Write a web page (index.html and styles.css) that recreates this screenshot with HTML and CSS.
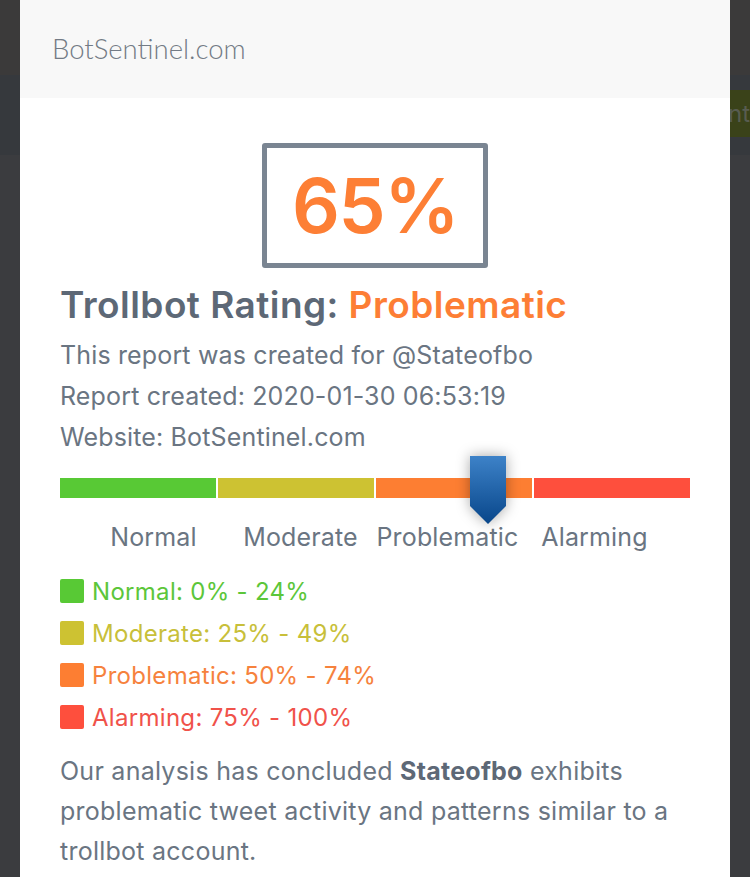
FILE: index.html
```html
<!DOCTYPE html>
<html>
<head>
<meta charset="utf-8">
<link rel="stylesheet" href="styles.css">
</head>
<body>
<div class="page">
  <div class="topbar"></div>
  <div class="navband"><span class="navbtn">nt</span></div>
</div>
<div class="modal">
  <div class="modal-header">BotSentinel.com</div>
  <div class="modal-body">
    <div class="score-wrap"><div class="score">65%</div></div>
    <h2 class="rating">Trollbot Rating: <span class="problematic">Problematic</span></h2>
    <p class="info">This report was created for @Stateofbo</p>
    <p class="info">Report created: 2020-01-30 06:53:19</p>
    <p class="info">Website: BotSentinel.com</p>
    <div class="meter">
      <div class="bar">
        <div class="seg seg-normal"></div>
        <div class="seg seg-moderate"></div>
        <div class="seg seg-problematic"></div>
        <div class="seg seg-alarming"></div>
      </div>
      <div class="marker" style="left: 65%;">
        <svg width="36" height="68" viewBox="0 0 36 68">
          <defs>
            <linearGradient id="mg" x1="0" y1="0" x2="0" y2="1">
              <stop offset="0" stop-color="#3d82c8"/>
              <stop offset="1" stop-color="#08468a"/>
            </linearGradient>
          </defs>
          <path d="M0 0 H36 V50 L18 68 L0 50 Z" fill="url(#mg)"/>
        </svg>
      </div>
    </div>
    <div class="labels">
      <span>Normal</span><span>Moderate</span><span>Problematic</span><span>Alarming</span>
    </div>
    <ul class="legend">
      <li class="l-normal"><i></i>Normal: 0% - 24%</li>
      <li class="l-moderate"><i></i>Moderate: 25% - 49%</li>
      <li class="l-problematic"><i></i>Problematic: 50% - 74%</li>
      <li class="l-alarming"><i></i>Alarming: 75% - 100%</li>
    </ul>
    <p class="summary">Our analysis has concluded <b>Stateofbo</b> exhibits problematic tweet activity and patterns similar to a trollbot account.</p>
  </div>
</div>
</body>
</html>
```
FILE: styles.css
```css
html, body {
  margin: 0;
  padding: 0;
}
body {
  background: #3b3c3f;
  width: 750px;
  height: 877px;
  overflow: hidden;
  position: relative;
  font-family: Inter, "Liberation Sans", sans-serif;
}
.topbar {
  height: 75px;
  background: #3b3a3a;
}
.navband {
  height: 80px;
  background: #36393d;
  display: flex;
  justify-content: flex-end;
  align-items: flex-start;
}
.navbtn {
  margin-top: 15px;
  height: 47px;
  width: 40px;
  background: #3a4219;
  color: #585c50;
  font-size: 24px;
  line-height: 47px;
  text-align: right;
  overflow: hidden;
}
.modal {
  position: absolute;
  left: 20px;
  top: 0;
  width: 710px;
  height: 877px;
  background: #fff;
  overflow: hidden;
}
.modal-header {
  height: 98px;
  background: #f8f8f8;
  padding-left: 32px;
  box-sizing: border-box;
  font-family: Lato, sans-serif;
  font-weight: 300;
  font-size: 27.5px;
  line-height: 98px;
  color: #737b85;
}
.modal-body {
  padding: 0 40px;
}
.score-wrap {
  display: flex;
  justify-content: center;
  padding-top: 45px;
}
.score {
  width: 226px;
  height: 125px;
  box-sizing: border-box;
  border: 5px solid #7a8592;
  border-radius: 3px;
  display: flex;
  align-items: center;
  justify-content: center;
  font-weight: 600;
  font-size: 75px;
  color: #fd7f35;
  letter-spacing: -1.5px;
}
.rating {
  margin: 14px 0 0;
  font-size: 37px;
  font-weight: 600;
  letter-spacing: 0.45px;
  line-height: 46px;
  color: #5d6876;
}
.problematic {
  color: #fd7e35;
}
.info {
  margin: 0;
  font-size: 25px;
  letter-spacing: 0.15px;
  line-height: 41px;
  color: #6a7582;
}
.rating + .info {
  margin-top: 7px;
}
.meter {
  position: relative;
  margin-top: 20px;
  height: 20px;
}
.bar {
  display: grid;
  grid-template-columns: repeat(4, 1fr);
  gap: 2px;
  height: 20px;
}
.seg-normal { background: #58c935; }
.seg-moderate { background: #cdc232; }
.seg-problematic { background: #fd7e32; }
.seg-alarming { background: #fe4f3d; }
.marker {
  position: absolute;
  top: -22px;
  width: 36px;
  height: 68px;
  filter: drop-shadow(0 0 7px rgba(0, 0, 0, 0.35));
}
.marker svg {
  display: block;
}
.labels {
  display: grid;
  grid-template-columns: repeat(4, 147px);
  padding-left: 20px;
  margin-top: 20px;
  font-size: 25px;
  letter-spacing: 0.15px;
  line-height: 38px;
  color: #6a7582;
  text-align: center;
  white-space: nowrap;
}
.legend {
  list-style: none;
  margin: 14px 0 0;
  padding: 0;
}
.legend li {
  display: flex;
  align-items: center;
  height: 42px;
  font-size: 24px;
  letter-spacing: 0.3px;
}
.legend i {
  width: 24px;
  height: 24px;
  border-radius: 2px;
  margin-right: 8px;
  flex: none;
}
.l-normal { color: #5cc63a; }
.l-normal i { background: #58c935; }
.l-moderate { color: #c8bf3a; }
.l-moderate i { background: #cdc232; }
.l-problematic { color: #f6823d; }
.l-problematic i { background: #fd7e32; }
.l-alarming { color: #f0524a; }
.l-alarming i { background: #fe4f3d; }
.summary {
  margin: 13px 0 0;
  font-size: 25px;
  letter-spacing: 0.25px;
  line-height: 40px;
  color: #6a7582;
}
.summary b {
  font-weight: 700;
  color: #5d6876;
}
```
